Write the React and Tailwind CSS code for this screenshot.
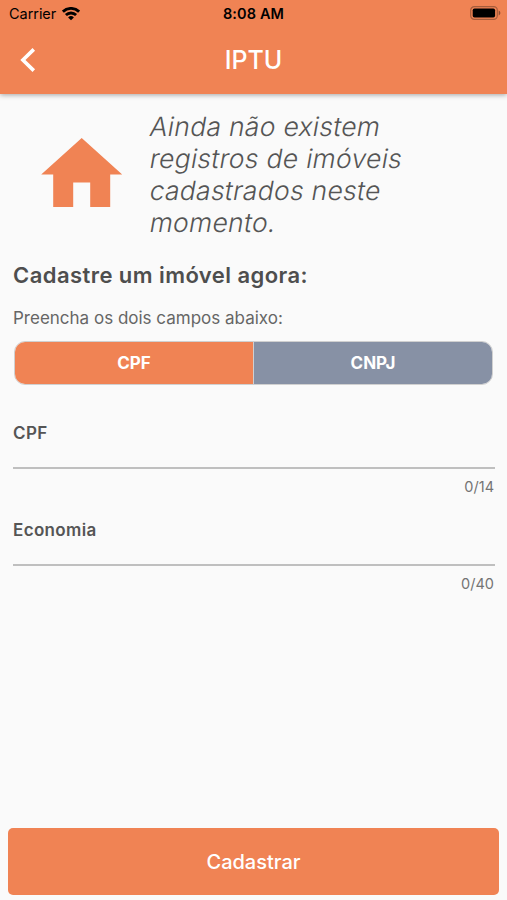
import { useState } from 'react'

const avisoLinhas = ['Ainda não existem', 'registros de imóveis', 'cadastrados neste', 'momento.']

function StatusBar() {
  return (
    <div className="grid h-[27px] grid-cols-3 items-center text-black">
      <div className="flex items-center gap-[6px] pl-[9px]">
        <span className="pt-0.5 text-[14.5px] leading-none tracking-[-0.05px]">Carrier</span>
        <svg className="h-[14px] w-[18px]" viewBox="0 0 18 14" fill="none" stroke="currentColor" strokeWidth="2.8">
          <path d="M0.9 4.7a11.5 11.5 0 0 1 16.2 0" />
          <path d="M3.9 8.1a7.2 7.2 0 0 1 10.2 0" />
          <path d="M9 13.3 6.1 10.5a4.1 4.1 0 0 1 5.8 0z" fill="currentColor" stroke="none" />
        </svg>
      </div>
      <span className="pt-0.5 text-center text-[14.5px] font-semibold leading-none tracking-[0.1px]">8:08 AM</span>
      <div className="flex justify-end pb-px pr-[6px]">
        <svg className="h-[14px] w-[31px]" viewBox="0 0 31 14">
          <rect x="0.7" y="0.7" width="26.6" height="12.6" rx="3.6" fill="none" stroke="#a65c3b" strokeWidth="1.2" />
          <rect x="2.7" y="2.5" width="22.4" height="9" rx="1.8" fill="#000" />
          <path d="M28.7 4.6c2.2.8 2.2 4 0 4.8z" fill="#8e4f34" />
        </svg>
      </div>
    </div>
  )
}

function Header({ title }) {
  return (
    <header className="relative z-10 h-[94px] bg-[#f08354] shadow-[0_1px_5px_rgba(0,0,0,0.35)]">
      <StatusBar />
      <div className="grid h-[66px] grid-cols-3 items-center text-white">
        <button className="mb-px ml-5 w-4" aria-label="Voltar">
          <svg className="h-6 w-4" viewBox="0 0 16 24" fill="none" stroke="currentColor" strokeWidth="3.6">
            <path d="M13.8 1.4 2.9 12 13.8 22.6" />
          </svg>
        </button>
        <h1 className="text-center text-[25px] font-medium leading-none">{title}</h1>
      </div>
    </header>
  )
}

function HouseIcon() {
  return (
    <svg className="h-[69px] w-[82px] shrink-0" viewBox="0 0 82 69" fill="#f08354">
      <path d="M40.7 0 81.2 36.5H69.2V69H49.2V44.5H32.2V69H12.2V36.5H0.2z" />
    </svg>
  )
}

function Campo({ label, max }) {
  const [valor, setValor] = useState('')

  return (
    <label className="block h-[97px]">
      <span className="block text-[17px] font-semibold leading-6 tracking-[0.35px] text-[#555]">{label}</span>
      <input
        className="block h-6 w-full border-b-2 border-[#bfbfbf] bg-transparent text-[17px] text-[#555] outline-none"
        value={valor}
        maxLength={max}
        onChange={(e) => setValor(e.target.value)}
      />
      <span className="mt-2 block pr-px text-right text-[14.5px] leading-5 text-[#747474]">
        {valor.length}/{max}
      </span>
    </label>
  )
}

export default function App() {
  const [tipo, setTipo] = useState('CPF')

  return (
    <div className="flex h-[900px] w-full flex-col bg-[#fafafa] font-['Inter',sans-serif]">
      <Header title="IPTU" />

      <main className="flex flex-1 flex-col pl-[13px] pr-3">
        <div className="mt-[18px] flex h-[127px] items-center gap-[27px] pl-7">
          <div className="pb-[6px]">
            <HouseIcon />
          </div>
          {/* slanted roman, so the letters keep their upright shapes */}
          <p className="w-[300px] pb-px text-[26.5px] font-light leading-[31.8px] tracking-[0.28px] text-[#555]">
            {avisoLinhas.map((linha) => (
              <span key={linha} className="block -skew-x-[10deg]">
                {linha}{' '}
              </span>
            ))}
          </p>
        </div>

        <h2 className="mt-5 text-[22px] font-semibold leading-8 tracking-[0.44px] text-[#4e4e4e]">
          Cadastre um imóvel agora:
        </h2>
        <p className="mt-[15px] text-[17px] leading-6 text-[#666]">Preencha os dois campos abaixo:</p>

        <div className="ml-px mr-0.5 mt-[11px] flex h-[44px] overflow-hidden rounded-[11px] border border-[#d0d0d0]">
          {['CPF', 'CNPJ'].map((item) => (
            <button
              key={item}
              onClick={() => setTipo(item)}
              className={`flex-1 pt-px text-[17px] font-bold text-white last:border-l last:border-[#d0d0d0] ${
                tipo === item ? 'bg-[#f08354]' : 'bg-[#8791a5]'
              }`}
            >
              {item}
            </button>
          ))}
        </div>

        <div className="mt-9">
          <Campo label={tipo} max={14} />
          <Campo label="Economia" max={40} />
        </div>
      </main>

      <footer className="px-2 pb-[5px]">
        <button className="h-[67px] w-full rounded-[5px] bg-[#f08354] text-[20px] font-medium text-white">
          Cadastrar
        </button>
      </footer>
    </div>
  )
}
